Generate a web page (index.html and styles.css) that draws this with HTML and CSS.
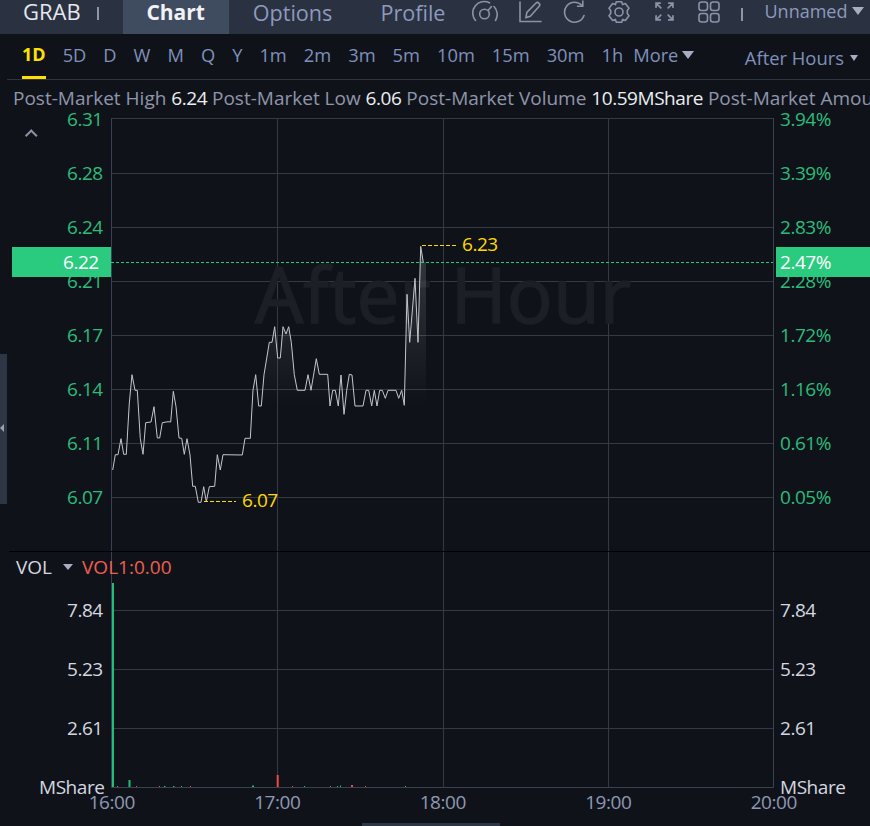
FILE: index.html
```html
<!DOCTYPE html>
<html lang="en">
<head>
  <meta charset="UTF-8" />
  <title>GRAB Chart</title>
  <link rel="stylesheet" href="styles.css">
</head>
<body>
  <header class="topbar">
    <span class="symbol">GRAB</span>
    <span class="sep sep-symbol"></span>
    <a class="tab tab-active">Chart</a>
    <a class="tab">Options</a>
    <a class="tab">Profile</a>
    <div class="tools">
      <svg class="icon icon-gauge" viewBox="0 0 26 24"><path d="M3.5 20.5A11.5 11.5 0 0 1 17.5 2.8M22 6.5A11.500 11.500 0 0 1 23.500 20.500"/><circle cx="12.500" cy="14" r="4.800"/><path d="M16 10.500L19.500 6.500"/></svg>
      <svg class="icon icon-edit" viewBox="0 0 24 24"><path d="M2 2V21.500H23"/><path d="M8 17.500L8.800 12.500L17.800 3.200C18.800 2.200 20 2.200 21 3.200C22 4.200 22 5.500 21 6.500L12.300 16.200Z"/></svg>
      <svg class="icon icon-refresh" viewBox="0 0 24 24"><path d="M20 5.500A10 10 0 1 0 22 15.500"/><path d="M20.800 1V6.300H15.500"/></svg>
      <svg class="icon icon-gear" viewBox="0 0 24 24"><path d="M9.300 1.800H14.700L15.600 4.600L18.300 3.500L22 8.200L20.300 10.500V13.500L22 15.800L18.300 20.500L15.600 19.400L14.700 22.200H9.300L8.400 19.400L5.700 20.500L2 15.800L3.700 13.500V10.500L2 8.200L5.700 3.500L8.400 4.600Z" stroke-linejoin="round"/><circle cx="12" cy="12" r="4"/></svg>
      <svg class="icon icon-expand" viewBox="0 0 18 18"><path d="M1 5V1H5M1 1L5.500 5.500M13 1H17V5M17 1L12.500 5.500M1 13V17H5M1 17L5.500 12.500M13 17H17V13M17 17L12.500 12.500"/></svg>
      <svg class="icon icon-layout" viewBox="0 0 22 22"><rect x="1" y="1" width="8.500" height="8.500" rx="2.500"/><rect x="12.500" y="1" width="8.500" height="8.500" rx="2.500"/><rect x="1" y="12.500" width="8.500" height="8.500" rx="2.500"/><rect x="12.500" y="12.500" width="8.500" height="8.500" rx="2.500"/></svg>
    </div>
    <span class="sep sep-tools"></span>
    <span class="layout-name">Unnamed<i class="caret caret-lg"></i></span>
  </header>

  <nav class="toolbar">
    <a class="period period-active">1D</a>
    <a class="period">5D</a>
    <a class="period">D</a>
    <a class="period">W</a>
    <a class="period">M</a>
    <a class="period">Q</a>
    <a class="period">Y</a>
    <a class="period">1m</a>
    <a class="period">2m</a>
    <a class="period">3m</a>
    <a class="period">5m</a>
    <a class="period">10m</a>
    <a class="period">15m</a>
    <a class="period">30m</a>
    <a class="period">1h</a>
    <a class="period period-more">More<i class="caret caret-lg"></i></a>
    <a class="session">After Hours<i class="caret caret-sm"></i></a>
  </nav>

  <div class="stats">
    Post-Market High <b>6.24</b> Post-Market Low <b>6.06</b> Post-Market Volume <b>10.59MShare</b> Post-Market Amount
  </div>

  <main class="chart">
    <div class="side-handle"><i></i></div>

    <section class="pane price-pane">
      <div class="axis axis-left price-axis">
        <span>6.31</span><span>6.28</span><span>6.24</span><span>6.21</span>
        <span>6.17</span><span>6.14</span><span>6.11</span><span>6.07</span>
      </div>
      <svg class="plot" viewBox="111 107 663 444">
        <defs>
          <linearGradient id="areaFade" gradientUnits="userSpaceOnUse" x1="0" y1="246" x2="0" y2="405">
            <stop offset="0" stop-color="#fff" stop-opacity="0.16"/>
            <stop offset="1" stop-color="#fff" stop-opacity="0"/>
          </linearGradient>
        </defs>
        <path class="grid-h" d="M111 173.500H773M111 227.500H773M111 281.500H773M111 335.500H773M111 389.500H773M111 443.500H773M111 497.500H773"/>
        <path class="grid-h" d="M111 118.500H773"/>
        <path class="grid-h" d="M277.500 118V551M443.500 118V551M608.500 118V551"/>
        <path class="grid-edge" d="M111.500 118V551M773.500 118V551"/>
        <text class="watermark" x="255" y="323">After Hour</text>
        <polygon class="area" points="112.700,470 115.300,454.700 118,454.700 121,438.700 123.700,454.300 126.300,454.300 129.300,403 132,374.700 135,390.300 137.300,390.300 140.300,438.700 143,454.300 145.700,422.700 151,422 154,406.700 157.300,438 159.700,438 162.300,422.700 168,421.700 170.700,422 173.300,391.300 176,406.700 179,438 181.700,438.300 184.300,454.300 187,438.700 190,455 192.700,486.300 195.300,486.300 198.300,502.300 201,502.300 203.700,486.700 206.300,501.700 209.300,486.700 214.700,486.300 217.300,454.700 220.300,470 223,454.700 242.300,455 245,438.300 250.300,438.300 253,390 255.700,374.700 258.700,406 261.300,406 264,374.700 269.300,342.300 272,342.300 274.700,326.700 277.700,358 280.300,358 283,326.700 286,334 288.700,326.700 291.300,342.300 294.300,374.700 297.300,390.300 305,390.300 308,374.700 311,390.300 316.300,358.700 319.300,374.300 327.700,374.300 330,406 332.700,390.300 335.300,390.300 338.300,406 341,375 344,414.300 346.700,390.300 349.300,374.300 352,375 355,406 363,406 366,390.300 368.700,390.300 371.700,406 374.300,390.300 377,406 379.700,390.300 382.300,390.300 385.300,398.300 388,390.300 396,390.300 398.700,398.300 401.700,390.300 404.300,405.300 407,294.300 409.700,342.300 415,278.300 418,342.300 420.700,246.300 423.300,262.300 426,262.300 426,414 112.700,414"/>
        <polyline class="price-line" points="112.700,470 115.300,454.700 118,454.700 121,438.700 123.700,454.300 126.300,454.300 129.300,403 132,374.700 135,390.300 137.300,390.300 140.300,438.700 143,454.300 145.700,422.700 151,422 154,406.700 157.300,438 159.700,438 162.300,422.700 168,421.700 170.700,422 173.300,391.300 176,406.700 179,438 181.700,438.300 184.300,454.300 187,438.700 190,455 192.700,486.300 195.300,486.300 198.300,502.300 201,502.300 203.700,486.700 206.300,501.700 209.300,486.700 214.700,486.300 217.300,454.700 220.300,470 223,454.700 242.300,455 245,438.300 250.300,438.300 253,390 255.700,374.700 258.700,406 261.300,406 264,374.700 269.300,342.300 272,342.300 274.700,326.700 277.700,358 280.300,358 283,326.700 286,334 288.700,326.700 291.300,342.300 294.300,374.700 297.300,390.300 305,390.300 308,374.700 311,390.300 316.300,358.700 319.300,374.300 327.700,374.300 330,406 332.700,390.300 335.300,390.300 338.300,406 341,375 344,414.300 346.700,390.300 349.300,374.300 352,375 355,406 363,406 366,390.300 368.700,390.300 371.700,406 374.300,390.300 377,406 379.700,390.300 382.300,390.300 385.300,398.300 388,390.300 396,390.300 398.700,398.300 401.700,390.300 404.300,405.300 407,294.300 409.700,342.300 415,278.300 418,342.300 420.700,246.300 423.300,262.300"/>
        <path class="last-line" d="M111 262.500H773"/>
        <path class="mark-line" d="M422 245.500H456M204 501.500H236"/>
        <text class="mark-text" x="462" y="251">6.23</text>
        <text class="mark-text" x="242" y="507">6.07</text>
      </svg>
      <div class="axis axis-right price-axis">
        <span>3.94%</span><span>3.39%</span><span>2.83%</span><span>2.28%</span>
        <span>1.72%</span><span>1.16%</span><span>0.61%</span><span>0.05%</span>
      </div>
      <span class="collapse"></span>
      <span class="badge badge-left">6.22</span>
      <span class="badge badge-right">2.47%</span>
    </section>

    <section class="pane vol-pane">
      <div class="axis axis-left vol-axis">
        <span>7.84</span><span>5.23</span><span>2.61</span><span class="unit">MShare</span>
      </div>
      <svg class="plot" viewBox="111 552 663 237">
        <path class="grid-h" d="M111 610.500H773M111 669.500H773M111 728.500H773"/>
        <path class="grid-h" d="M277.500 552V787M443.500 552V787M608.500 552V787"/>
        <path class="grid-edge" d="M111.500 552V787.500H773.500V552"/>
        <g class="vol-up">
          <rect x="112" y="583" width="2" height="204"/>
          <rect x="128.500" y="780" width="2" height="7"/>
          <rect x="252" y="785.500" width="2" height="1.500"/>
          <rect x="340" y="785.500" width="1" height="1.500"/>
          <rect x="164" y="786" width="1.500" height="1"/>
          <rect x="173" y="786" width="1.500" height="1"/>
          <rect x="304" y="786" width="1" height="1"/>
          <rect x="337" y="786" width="1" height="1"/>
          <rect x="405" y="786" width="1" height="1"/>
          <rect x="117" y="786" width="1" height="1"/>
          <rect x="181" y="786" width="1" height="1"/>
        </g>
        <g class="vol-down">
          <rect x="276.700" y="775" width="2" height="12"/>
          <rect x="351" y="785" width="2" height="2"/>
          <rect x="159" y="786" width="1" height="1"/>
          <rect x="190" y="786" width="1" height="1"/>
          <rect x="136" y="786" width="1" height="1"/>
          <rect x="292" y="786" width="1" height="1"/>
          <rect x="330" y="786" width="1" height="1"/>
          <rect x="365" y="786" width="1" height="1"/>
        </g>
      </svg>
      <div class="axis axis-right vol-axis">
        <span>7.84</span><span>5.23</span><span>2.61</span><span>MShare</span>
      </div>
      <div class="vol-legend">VOL<i class="caret caret-sm"></i><em>VOL1:0.00</em></div>
    </section>

    <div class="time-axis">
      <span>16:00</span><span>17:00</span><span>18:00</span><span>19:00</span><span>20:00</span>
    </div>
    <div class="scroll-thumb"></div>
  </main>
</body>
</html>
```
FILE: styles.css
```css
/* GLOBAL */
* {
  margin: 0;
  padding: 0;
  box-sizing: border-box;
}
html, body {
  width: 870px;
  height: 826px;
  overflow: hidden;
  background: #0f1319;
  font-family: "Open Sans", "Noto Sans", sans-serif;
  font-size: 19px;
  color: #8e9ac0;
}
i, em {
  font-style: normal;
}

/* TOP BAR */
.topbar {
  display: flex;
  align-items: center;
  height: 34px;
  padding-left: 23px;
  background: #2a3140;
  white-space: nowrap;
}
.symbol {
  font-size: 22px;
  color: #e6e8ee;
  line-height: 24px;
  margin-top: -12px;
}
.sep {
  width: 2px;
  height: 13px;
  background: #8d95aa;
}
.sep-symbol {
  margin: -7px 24px 0 16px;
}
.tab {
  height: 34px;
  padding: 0 24px;
  font-size: 21.600px;
  line-height: 25px;
  color: #8d9abd;
}
.tab-active {
  width: 106px;
  font-size: 21px;
  font-weight: 700;
  color: #f1f2f5;
  background: #3f4b5e;
  text-align: center;
  padding: 0;
}
.tools {
  display: flex;
  align-items: center;
  margin: -11px 0 0 2px;
}
.icon {
  display: block;
  fill: none;
  stroke: #8b93a8;
  stroke-width: 1.6;
  stroke-linecap: round;
}
.icon-gauge {
  width: 26px;
  height: 24px;
  margin-right: 20px;
}
.icon-edit {
  width: 24px;
  height: 24px;
  margin-right: 20px;
}
.icon-refresh {
  width: 24px;
  height: 24px;
  margin-right: 21px;
}
.icon-gear {
  width: 24px;
  height: 24px;
  margin-right: 24px;
}
.icon-expand {
  width: 19px;
  height: 19px;
  margin-right: 24px;
}
.icon-layout {
  width: 22px;
  height: 22px;
}
.sep-tools {
  margin: -6px 22px 0 21px;
}
.layout-name {
  display: flex;
  align-items: center;
  font-size: 18px;
  color: #8d9abd;
  margin-top: -12px;
}

/* CARETS */
.caret {
  display: inline-block;
  width: 0;
  height: 0;
  border-style: solid;
  border-color: #a7aec4 transparent transparent;
}
.caret-lg {
  margin-left: 4px;
  border-width: 8px 6px 0;
}
.caret-sm {
  margin-left: 6px;
  border-width: 6px 4.500px 0;
}

/* PERIOD TOOLBAR */
.toolbar {
  display: flex;
  align-items: center;
  gap: 17px;
  height: 46px;
  margin-left: 7px;
  padding-left: 15px;
  border-bottom: 1px solid #2e3440;
  white-space: nowrap;
}
.period {
  height: 45px;
  line-height: 41px;
  font-size: 18.300px;
  color: #7f90bd;
}
.period-active {
  font-size: 18px;
  font-weight: 700;
  color: #ffe100;
  border-bottom: 3px solid #ffe100;
}
.period-more {
  display: flex;
  align-items: flex-start;
  margin-left: -7px;
}
.period-more .caret {
  margin-top: 17px;
}
.session {
  display: flex;
  align-items: center;
  margin-left: auto;
  padding: 2px 12px 0 0;
  font-size: 18.400px;
  color: #7f90bd;
}

/* STATS ROW */
.stats {
  height: 36px;
  margin-bottom: -9px;
  padding-left: 13px;
  line-height: 36px;
  color: #8f95ac;
  white-space: nowrap;
  overflow: hidden;
}
.stats b {
  font-weight: 400;
  letter-spacing: -0.450px;
  color: #eceef2;
}

/* CHART */
.chart {
  position: relative;
}
.pane {
  position: relative;
  display: flex;
}
.price-pane {
  height: 444px;
}
.vol-pane {
  height: 238px;
  border-top: 1px solid #000;
  margin-left: 9px;
}
.vol-pane .axis-left {
  margin-left: -9px;
}
.plot {
  flex: none;
  display: block;
  width: 663px;
}
.axis {
  flex: none;
  display: flex;
  flex-direction: column;
  line-height: 24px;
  letter-spacing: -0.450px;
}
.axis span {
  height: 24px;
}
.axis-left {
  width: 111px;
  padding-left: 67px;
}
.axis-right {
  padding-left: 6px;
}
.price-axis {
  gap: 30px;
  color: #2dbb7a;
}
.vol-axis {
  gap: 35px;
  padding-top: 46px;
  color: #d5d8e0;
}
.unit {
  margin-left: -28px;
}
.grid-h {
  fill: none;
  stroke: #333945;
  stroke-width: 1;
}
.grid-edge {
  fill: none;
  stroke: #3a4150;
  stroke-width: 1;
}
.watermark {
  font-size: 76.500px;
  fill: #1c1f26;
  stroke: #1c1f26;
  stroke-width: 1.500;
}
.area {
  fill: url(#areaFade);
}
.price-line {
  fill: none;
  stroke: #c4c6ca;
  stroke-width: 1;
}
.last-line {
  fill: none;
  stroke: #26c97f;
  stroke-width: 1;
  stroke-dasharray: 3 2;
}
.mark-line {
  fill: none;
  stroke: #ffd900;
  stroke-width: 1;
  stroke-dasharray: 4 2;
}
.mark-text {
  letter-spacing: -0.450px;
  fill: #ffd900;
}
.vol-up {
  fill: #1fbf75;
}
.vol-down {
  fill: #ef4a45;
}

/* OVERLAYS */
.badge {
  position: absolute;
  top: 140px;
  height: 30px;
  line-height: 30px;
  letter-spacing: -0.450px;
  background: #2bcb7f;
  color: #fff;
}
.badge-left {
  left: 12px;
  width: 99px;
  padding-left: 51px;
}
.badge-right {
  left: 776px;
  width: 94px;
  padding-left: 4px;
}
.collapse {
  position: absolute;
  left: 27px;
  top: 24px;
  width: 8.500px;
  height: 8.500px;
  border-top: 2px solid #8b90a6;
  border-left: 2px solid #8b90a6;
  transform: rotate(45deg);
}
.side-handle {
  position: absolute;
  left: 0;
  top: 247px;
  width: 7px;
  height: 150px;
  background: #2c3645;
}
.side-handle i {
  position: absolute;
  left: 0;
  top: 70px;
  width: 0;
  height: 0;
  border-style: solid;
  border-width: 4px 4px 4px 0;
  border-color: transparent #9aa1b0 transparent transparent;
}
.vol-legend {
  position: absolute;
  left: 7px;
  top: 3px;
  display: flex;
  align-items: center;
  line-height: 24px;
  color: #d5d8e0;
}
.vol-legend .caret {
  margin: 0 9px 0 11px;
  border-width: 6px 5px 0;
}
.vol-legend em {
  color: #ee5f50;
}

/* TIME AXIS */
.time-axis {
  display: flex;
  padding-left: 29px;
  height: 26px;
  line-height: 26px;
  letter-spacing: -0.450px;
  color: #8f98b3;
}
.time-axis span {
  flex: 0 0 165.500px;
  text-align: center;
}
.scroll-thumb {
  position: absolute;
  left: 362px;
  bottom: -11px;
  width: 138px;
  height: 3px;
  background: #2c3645;
}
```
